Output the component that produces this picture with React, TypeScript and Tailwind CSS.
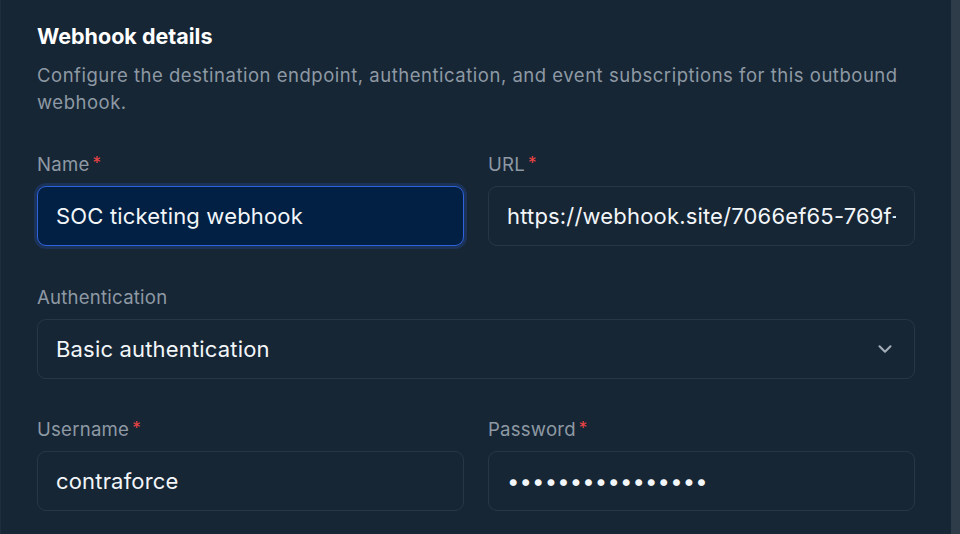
import React from 'react';

const Label = ({ children, required }: { children: React.ReactNode; required?: boolean }) => (
  <div className="flex items-center h-6 mb-[9px] text-[18.6px] text-[#8e99a4] tracking-[0.012em]">
    <span>{children}</span>
    {required && <span className="ml-[3px] text-[#ef4444] text-[17px] leading-none -mt-1">*</span>}
  </div>
);

const inputBase =
  'w-full h-[60px] rounded-[9px] px-[18px] text-[22px] text-[#f3f6f9] outline-none tracking-[0.008em]';

export default function App() {
  return (
    <div className="flex w-[960px] h-[534px] bg-[#162635] overflow-hidden" style={{ fontFamily: 'Inter, "Noto Sans", sans-serif' }}>
      <div className="w-px bg-[#1e2e3c]" />
      <div className="flex-1 pl-[36px] pr-[36px] pt-[22px]">
        <h2 className="text-[21.5px] leading-7 font-bold text-white">Webhook details</h2>
        <p className="mt-[12px] text-[18.5px] leading-[27px] text-[#8e99a4] tracking-[0.028em]">
          Configure the destination endpoint, authentication, and event subscriptions for this outbound webhook.
        </p>

        <div className="mt-[37px] flex flex-col">
          <div className="grid grid-cols-2 gap-6">
            <div>
              <Label required>Name</Label>
              <input
                readOnly
                value="SOC ticketing webhook"
                className={`${inputBase} bg-[#012044] border border-[#2f62dc] ring-[3px] ring-[#1b3358]`}
              />
            </div>
            <div>
              <Label required>URL</Label>
              <input
                readOnly
                value="https://webhook.site/7066ef65-769f-4c1a-9b2e-5d3f1a8c0e42"
                className={`${inputBase} bg-transparent border border-[#263747]`}
              />
            </div>
          </div>

          <div className="mt-[40px]">
            <Label>Authentication</Label>
            <div className={`${inputBase} flex items-center justify-between border border-[#263747]`}>
              <span>Basic authentication</span>
              <svg width="22" height="22" viewBox="0 0 24 24" fill="none" stroke="#a3adb8" strokeWidth="2.3" strokeLinecap="round" strokeLinejoin="round">
                <path d="M6 9l6 6 6-6" />
              </svg>
            </div>
          </div>

          <div className="mt-[39px] grid grid-cols-2 gap-6">
            <div>
              <Label required>Username</Label>
              <input readOnly value="contraforce" className={`${inputBase} bg-transparent border border-[#263747]`} />
            </div>
            <div>
              <Label required>Password</Label>
              <input
                readOnly
                type="password"
                value="contraforce12345"
                className={`${inputBase} bg-transparent border border-[#263747]`}
              />
            </div>
          </div>
        </div>
      </div>
      <div className="w-[9px] bg-[#2e3c4a]" />
    </div>
  );
}
